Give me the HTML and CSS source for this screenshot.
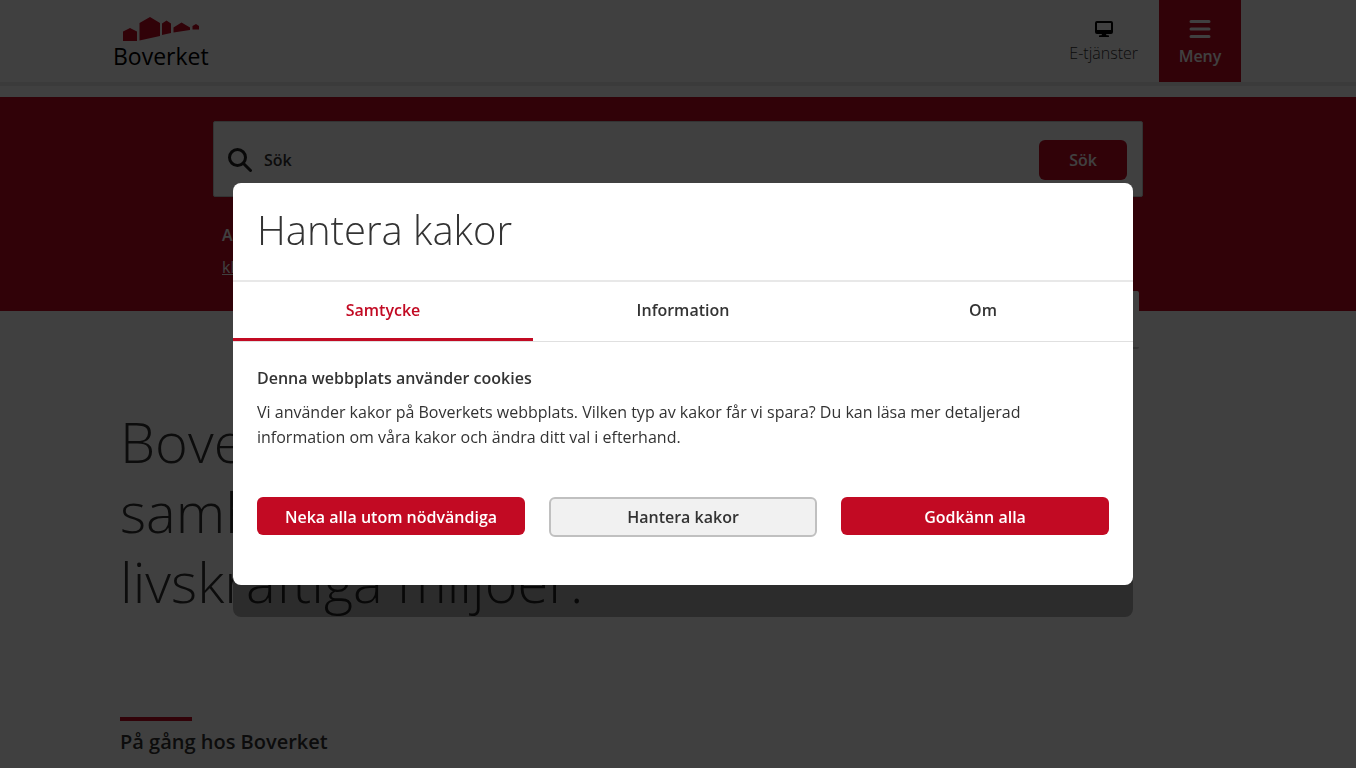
FILE: index.html
```html
<!DOCTYPE html>
<html lang="sv">
<head>
<meta charset="utf-8">
<title>Boverket</title>
<link rel="stylesheet" href="styles.css">
</head>
<body>
<div class="page">
<header class="top">
<div class="top-inner">
<a href="#" class="logo">
<svg width="96" height="26" viewBox="0 0 96 26">
<path d="M10 14.500l7-3.500 7 3.500V24H10zM26.500 6L37 0l10 6v13l-20.500 4.500zM49 6.500l4.500-3L58 6.500V16l-9 2zM60.500 10.500l8-5 8.500 5V13l-16.500 2.500zM79.500 9L83 7l3 2v3.500h-6.500z"/>
</svg>
<span class="logo-name">Boverket</span>
</a>
<nav class="top-nav">
<a href="#" class="services">
<svg width="18" height="16" viewBox="0 0 18 16">
<path fill-rule="evenodd" d="M2 0h14a2 2 0 0 1 2 2v9a2 2 0 0 1-2 2h-5l.5 1.300h1.700a.8.8 0 0 1 0 1.700H4.800a.8.8 0 0 1 0-1.700h1.700L7 13H2a2 2 0 0 1-2-2V2a2 2 0 0 1 2-2zM2 2v7h14V2z"/>
</svg>
<span>E-tjänster</span>
</a>
<button type="button" class="menu">
<svg width="22" height="18" viewBox="0 0 22 18">
<path d="M2 1.500h18M2 9h18M2 16.500h18"/>
</svg>
<span>Meny</span>
</button>
</nav>
</div>
</header>

<main>
<section class="hero">
<form class="search">
<label for="q" class="search-icon" aria-label="Sök">
<svg width="24" height="24" viewBox="0 0 24 24"><circle cx="9.500" cy="9.500" r="8"/><path d="M15.500 15.500l7 7"/></svg>
</label>
<input type="text" id="q" class="search-field" placeholder="Sök">
<button type="submit" class="search-button">Sök</button>
</form>
<div class="popular">
<p>Andra söker</p>
<a href="#">klimat</a>
</div>
<div class="card"></div>
</section>

<section class="content">
<h1>Boverket<br>samhällen<br>livskraftiga miljöer.</h1>
<h2>På gång hos Boverket</h2>
</section>
</main>
</div>

<div class="overlay"></div>
<div class="modal-wrap">
<div class="modal" role="dialog" aria-labelledby="modal-title">
<h2 class="modal-title" id="modal-title">Hantera kakor</h2>
<div class="tabs" role="tablist">
<button type="button" role="tab" class="tab on">Samtycke</button>
<button type="button" role="tab" class="tab">Information</button>
<button type="button" role="tab" class="tab">Om</button>
</div>
<div class="modal-body">
<h3>Denna webbplats använder cookies</h3>
<p>Vi använder kakor på Boverkets webbplats. Vilken typ av kakor får vi spara? Du kan läsa mer detaljerad information om våra kakor och ändra ditt val i efterhand.</p>
<div class="buttons">
<button type="button" class="btn">Neka alla utom nödvändiga</button>
<button type="button" class="btn btn-grey">Hantera kakor</button>
<button type="button" class="btn">Godkänn alla</button>
</div>
</div>
</div>
</div>
</body>
</html>
```
FILE: styles.css
```css
*{
box-sizing:border-box;
}
body{
margin:0;
background:#fff;
color:#333;
font-family:"Open Sans", "Noto Sans", sans-serif;
font-size:16px;
line-height:24px;
}
/* room for the scrollbar */
.page{
margin-right:10px;
height:100vh;
overflow:hidden;
}
h1,h2,h3,p{
margin:0;
}
a{
color:inherit;
text-decoration:none;
}
button,input{
font:inherit;
color:inherit;
border:0;
padding:0;
background:none;
}
button{
cursor:pointer;
}
svg{
display:block;
}

/* header */
.top{
height:86px;
border-bottom:4px solid #ebebeb;
}
.top-inner{
display:flex;
justify-content:space-between;
max-width:1130px;
margin:0 auto;
padding-right:2px;
}
.logo{
padding-top:17px;
}
.logo svg{
fill:#c20a23;
}
.logo-name{
display:block;
font-size:23px;
line-height:26px;
color:#000;
}
.top-nav{
display:flex;
gap:21px;
}
.services{
display:flex;
flex-direction:column;
align-items:center;
gap:4px;
padding-top:21px;
font-weight:300;
}
.menu{
display:flex;
flex-direction:column;
align-items:center;
gap:6px;
width:82px;
height:82px;
padding-top:20px;
background:#c20a23;
color:#fff;
font-weight:600;
}
.menu path{
stroke:#fff;
stroke-width:3;
stroke-linecap:round;
}

/* search */
.hero{
display:flex;
flex-direction:column;
height:214px;
margin-top:11px;
padding-top:24px;
background:#c20a23;
}
.search{
display:flex;
align-items:center;
flex:none;
width:930px;
max-width:100%;
height:76px;
margin:0 auto;
padding:2px 15px 0 14px;
background:#fff;
border:1px solid #ccc;
border-radius:2px;
}
.search-icon svg{
fill:none;
stroke:#222;
stroke-width:3;
stroke-linecap:round;
}
.search-field{
flex:1;
height:40px;
margin-left:12px;
font-weight:600;
}
.search-field::placeholder{
color:#333;
opacity:1;
}
.search-button{
width:88px;
height:40px;
border-radius:6px;
background:#c20a23;
color:#fff;
font-weight:600;
}
.popular{
width:912px;
margin:26px auto 0;
color:#fff;
}
.popular p{
font-weight:600;
}
.popular a{
display:inline-block;
margin-top:8px;
text-decoration:underline;
}
.card{
flex:none;
width:861px;
height:58px;
margin:12px 217px 0 auto;
background:#fff;
border-bottom:2px solid #ccc;
border-radius:2px;
}

/* content */
.content{
max-width:1116px;
margin:0 auto;
padding-top:95px;
}
.content h1{
font-size:56px;
line-height:70px;
font-weight:300;
}
.content h2{
margin-top:101px;
font-size:20px;
line-height:28px;
font-weight:600;
}
.content h2::before{
content:"";
display:block;
width:72px;
height:4px;
margin-bottom:7px;
background:#c20a23;
}

/* cookie dialog */
.overlay{
position:fixed;
top:0;
right:10px;
bottom:0;
left:0;
background:rgba(0,0,0,.75);
}
.modal-wrap{
position:fixed;
top:0;
right:0;
bottom:0;
left:0;
display:flex;
align-items:center;
justify-content:center;
}
.modal{
width:900px;
max-width:100%;
background:#fff;
border-radius:8px;
box-shadow:0 32px 0 rgba(0,0,0,.32);
}
.modal-title{
padding:22px 24px 25px;
border-bottom:2px solid #e8e8e8;
font-size:40px;
line-height:50px;
font-weight:300;
}
.tabs{
display:flex;
border-bottom:1px solid #e0e0e0;
}
.tab{
flex:1;
height:59px;
border-bottom:3px solid transparent;
font-weight:600;
}
.tab.on{
color:#c20a23;
border-bottom-color:#c20a23;
}
.modal-body{
padding:24px 24px 48px;
}
.modal-body h3{
font-size:16px;
line-height:24px;
font-weight:600;
}
.modal-body p{
margin-top:10px;
line-height:25px;
}
.buttons{
display:grid;
grid-template-columns:repeat(3, 1fr);
align-items:start;
gap:24px;
margin-top:47px;
}
.btn{
height:38px;
padding-top:2px;
border-radius:6px;
background:#c20a23;
color:#fff;
font-weight:600;
}
.btn-grey{
height:40px;
padding-top:0;
background:#f1f1f1;
border:2px solid #c0c0c0;
color:#333;
}
```
